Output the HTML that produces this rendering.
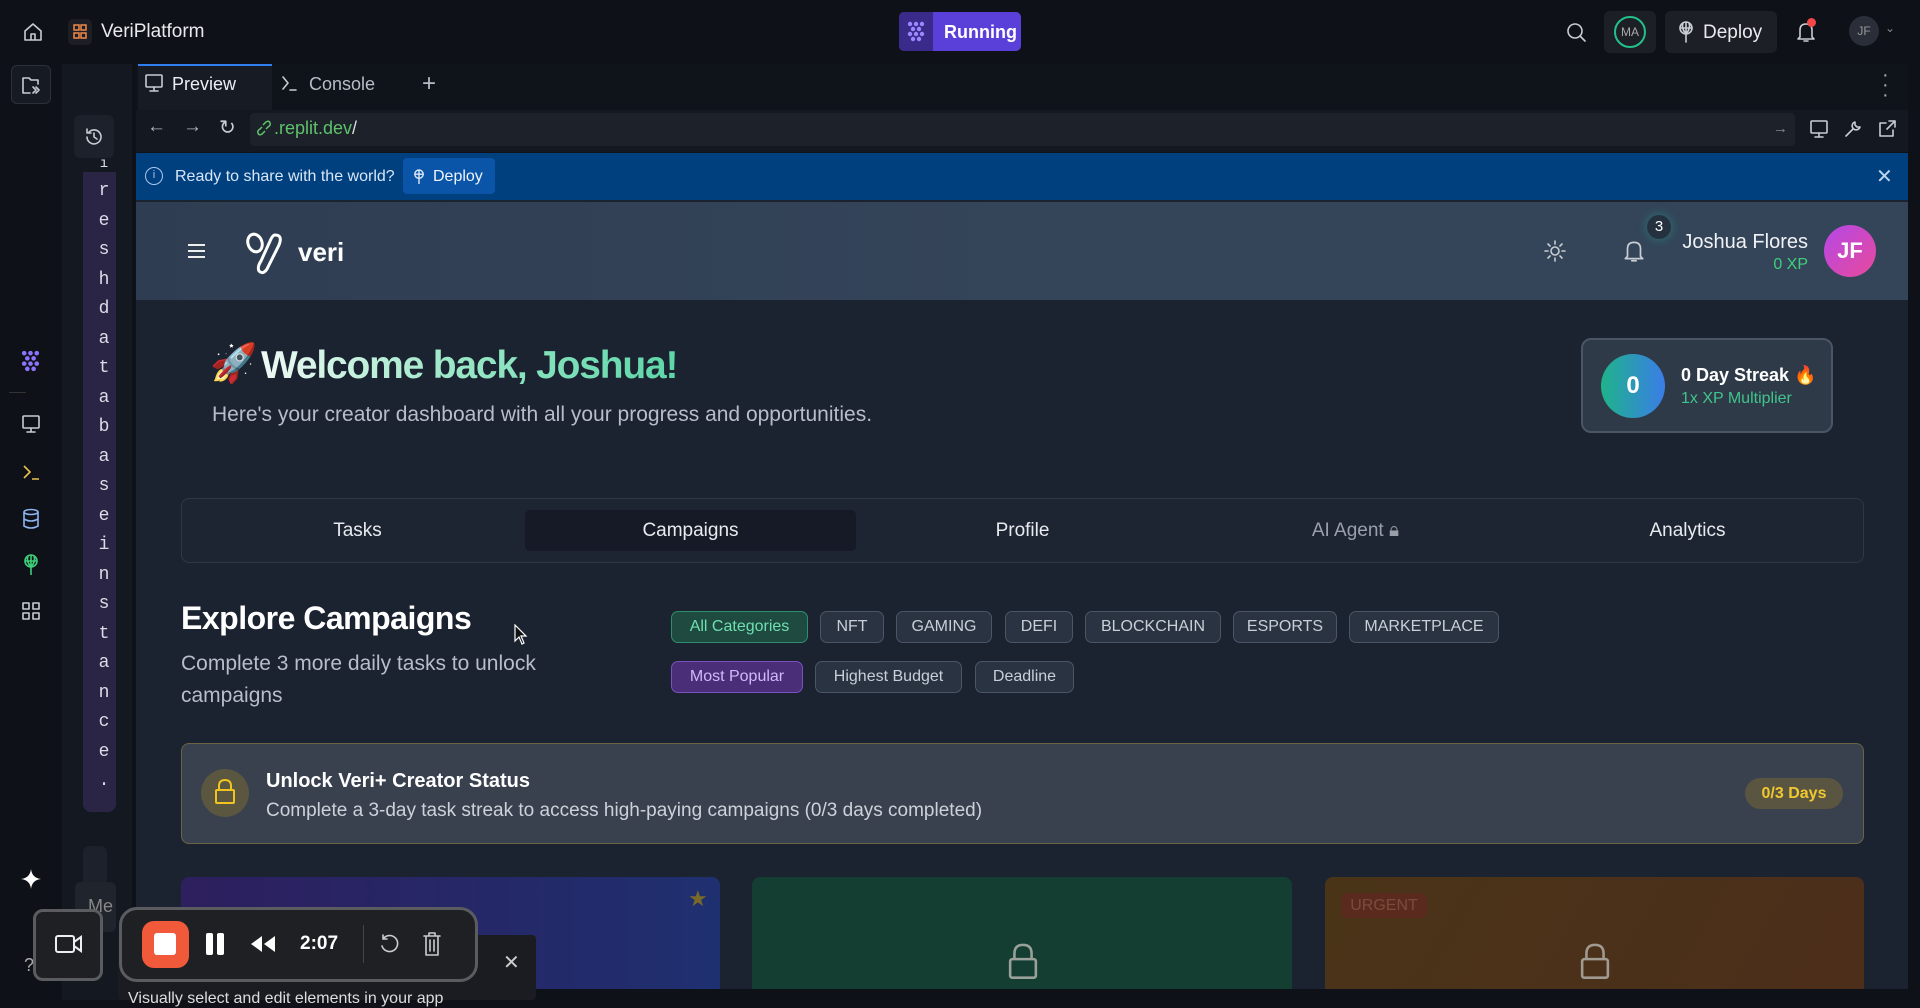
<!DOCTYPE html>
<html><head><meta charset="utf-8"><style>
*{margin:0;padding:0;box-sizing:border-box}
body{width:1920px;height:1000px;overflow:hidden;background:#0e1117;font-family:"Liberation Sans",sans-serif;color:#e6e8eb;position:relative}
.a{position:absolute}
.chip{position:absolute;height:32px;border:1.5px solid #4a5566;border-radius:7px;background:#2a3341;color:#c9cfd8;font-size:16px;display:flex;align-items:center;justify-content:center}
.ic{position:absolute;stroke:#c9ccd2;fill:none;stroke-width:1.6;stroke-linecap:round;stroke-linejoin:round}
.tab{position:absolute;top:511px;height:40px;width:333px;display:flex;align-items:center;justify-content:center;font-size:19px;color:#e8eaee}
.vl{position:absolute;left:97px;width:14px;text-align:center;font-size:18px;color:#dcdce6;font-family:"Liberation Mono",monospace}
</style></head><body>
<!-- top bar -->
<svg class="ic" style="left:22px;top:21px" width="22" height="22" viewBox="0 0 22 22"><path d="M3 10 L11 3 L19 10 V19 H3 Z M9 19 V13 H13 V19"/></svg>
<div class="a" style="left:68px;top:19px;width:24px;height:26px;background:#1c1e24;border-radius:5px"></div>
<svg class="a" style="left:73px;top:24px" width="14" height="16" viewBox="0 0 14 16"><g fill="none" stroke="#f08a4b" stroke-width="1.5"><rect x="1" y="1" width="5" height="5"/><rect x="8" y="1" width="5" height="5"/><rect x="1" y="9" width="5" height="5"/><rect x="8" y="9" width="5" height="5"/></g></svg>
<div class="a" style="left:101px;top:21px;font-size:19px;color:#e8eaee">VeriPlatform</div>
<div class="a" style="left:899px;top:12px;width:122px;height:39px;border-radius:5px;background:#5a3fd8;overflow:hidden">
 <div class="a" style="left:0;top:0;width:34px;height:39px;background:#3a2a8a"></div>
 <svg class="a" style="left:7px;top:9px" width="21" height="21" viewBox="0 0 21 21" fill="#9b87ff"><circle cx="4" cy="3" r="2.2"/><circle cx="10" cy="3" r="2.2"/><circle cx="16" cy="3" r="2.2"/><circle cx="7" cy="8" r="2.2"/><circle cx="13" cy="8" r="2.2"/><circle cx="4" cy="13" r="2.2"/><circle cx="10" cy="13" r="2.2"/><circle cx="16" cy="13" r="2.2"/><circle cx="7" cy="18" r="2.2"/><circle cx="13" cy="18" r="2.2"/></svg>
 <div class="a" style="left:45px;top:10px;font-size:18px;font-weight:bold;color:#fff">Running</div>
</div>
<svg class="ic" style="left:1565px;top:21px" width="22" height="22" viewBox="0 0 22 22"><circle cx="10" cy="10" r="7"/><path d="M15 15 L20 20"/></svg>
<div class="a" style="left:1604px;top:11px;width:52px;height:42px;background:#1c1f26;border-radius:6px"></div>
<div class="a" style="left:1614px;top:16px;width:32px;height:32px;border:2.5px solid #22c08a;border-radius:50%;font-size:12px;color:#aaa;display:flex;align-items:center;justify-content:center">MA</div>
<div class="a" style="left:1665px;top:11px;width:112px;height:42px;background:#1c1f26;border-radius:6px"></div>
<svg class="ic" style="left:1676px;top:20px" width="20" height="24" viewBox="0 0 20 24"><circle cx="10" cy="8" r="6"/><path d="M4 8 H16 M10 2 V22 M7 3 Q5 8 10 14 Q15 8 13 3"/></svg>
<div class="a" style="left:1703px;top:22px;font-size:19px;color:#e8eaee">Deploy</div>
<svg class="ic" style="left:1795px;top:20px" width="22" height="24" viewBox="0 0 22 24"><path d="M5 17 V10 Q5 4 11 4 Q17 4 17 10 V17 L19 19 H3 Z M9 21 H13"/></svg>
<div class="a" style="left:1807px;top:18px;width:9px;height:9px;border-radius:50%;background:#f04848"></div>
<div class="a" style="left:1849px;top:16px;width:30px;height:30px;border-radius:50%;background:#2a2e38;font-size:12px;color:#999;display:flex;align-items:center;justify-content:center">JF</div>
<div class="a" style="left:1885px;top:21px;font-size:12px;color:#888">⌄</div>

<!-- left rail -->
<div class="a" style="left:11px;top:65px;width:40px;height:39px;border:1px solid #2c3038;border-radius:6px;background:#161a22"></div>
<svg class="ic" style="left:20px;top:74px" width="22" height="22" viewBox="0 0 22 22"><path d="M3 4 H9 L11 6 H18 V10 M3 4 V19 H10 M13 13 L16 16 L13 19 M16 13 L19 16 L16 19"/></svg>
<svg class="a" style="left:20px;top:350px" width="22" height="22" viewBox="0 0 21 21" fill="#8b74ff"><circle cx="4" cy="3" r="2.2"/><circle cx="10" cy="3" r="2.2"/><circle cx="16" cy="3" r="2.2"/><circle cx="7" cy="8" r="2.2"/><circle cx="13" cy="8" r="2.2"/><circle cx="4" cy="13" r="2.2"/><circle cx="10" cy="13" r="2.2"/><circle cx="16" cy="13" r="2.2"/><circle cx="7" cy="18" r="2.2"/><circle cx="13" cy="18" r="2.2"/></svg>
<div class="a" style="left:9px;top:392px;width:17px;height:1px;background:#333"></div>
<svg class="ic" style="left:20px;top:413px" width="22" height="22" viewBox="0 0 22 22"><rect x="3" y="3" width="16" height="12" rx="1"/><path d="M11 15 V19 M7 19 H15"/></svg>
<svg class="a" style="left:20px;top:461px" width="22" height="22" viewBox="0 0 22 22" fill="none" stroke="#e8c14a" stroke-width="1.6"><path d="M4 5 L10 11 L4 17 M12 18 H19"/></svg>
<svg class="a" style="left:21px;top:508px" width="20" height="22" viewBox="0 0 20 22" fill="none" stroke="#8fb4f0" stroke-width="1.6"><ellipse cx="10" cy="4" rx="7" ry="2.5"/><path d="M3 4 V18 Q10 22 17 18 V4 M3 11 Q10 15 17 11"/></svg>
<svg class="a" style="left:21px;top:553px" width="20" height="24" viewBox="0 0 20 24" fill="none" stroke="#3ecf7a" stroke-width="1.6"><circle cx="10" cy="8" r="6"/><path d="M4 8 H16 M10 2 V22 M7 3 Q5 8 10 14 Q15 8 13 3"/></svg>
<svg class="ic" style="left:21px;top:601px" width="20" height="20" viewBox="0 0 20 20"><rect x="2" y="2" width="6" height="6"/><rect x="12" y="2" width="6" height="6"/><rect x="2" y="12" width="6" height="6"/><rect x="12" y="12" width="6" height="6"/></svg>
<svg class="a" style="left:21px;top:869px" width="20" height="20" viewBox="0 0 20 20" fill="#fff"><path d="M10 0 Q11 9 20 10 Q11 11 10 20 Q9 11 0 10 Q9 9 10 0Z"/></svg>
<div class="a" style="left:24px;top:955px;font-size:18px;color:#aaa">?</div>

<!-- second column -->
<div class="a" style="left:62px;top:64px;width:70px;height:936px;background:#141821"></div>
<div class="a" style="left:74px;top:115px;width:40px;height:43px;background:#1c212b;border-radius:6px"></div>
<svg class="ic" style="left:83px;top:126px" width="22" height="22" viewBox="0 0 22 22"><path d="M4 11 A7 7 0 1 0 6 6 M4 3 V7 H8 M11 7 V11 L14 13"/></svg>
<div class="a" style="left:83px;top:172px;width:33px;height:640px;background:#2a2545;border-radius:0 0 8px 8px"></div>
<div class="vl" style="top:156px;font-size:14px">ı</div>
<div class="vl" style="top:181px">r</div><div class="vl" style="top:211px">e</div><div class="vl" style="top:240px">s</div><div class="vl" style="top:270px">h</div><div class="vl" style="top:299px">d</div><div class="vl" style="top:329px">a</div><div class="vl" style="top:358px">t</div><div class="vl" style="top:388px">a</div><div class="vl" style="top:417px">b</div><div class="vl" style="top:447px">a</div><div class="vl" style="top:476px">s</div><div class="vl" style="top:506px">e</div><div class="vl" style="top:535px">i</div><div class="vl" style="top:565px">n</div><div class="vl" style="top:594px">s</div><div class="vl" style="top:624px">t</div><div class="vl" style="top:653px">a</div><div class="vl" style="top:683px">n</div><div class="vl" style="top:712px">c</div><div class="vl" style="top:742px">e</div><div class="vl" style="top:771px">.</div>
<div class="a" style="left:83px;top:846px;width:24px;height:40px;background:#1c212b;border-radius:6px"></div>
<div class="a" style="left:75px;top:882px;width:41px;height:50px;background:#1f242d;border-radius:6px;font-size:18px;color:#888;padding:14px 0 0 13px">Me</div>

<!-- main panel -->
<div class="a" style="left:136px;top:64px;width:1772px;height:46px;background:#0f131a"></div>
<div class="a" style="left:138px;top:64px;width:134px;height:46px;background:#161b24;border-top:2px solid #2f7ef0"></div>
<svg class="ic" style="left:144px;top:73px" width="20" height="20" viewBox="0 0 20 20"><rect x="2" y="2" width="16" height="12" rx="1"/><path d="M10 14 V18 M6 18 H14"/></svg>
<div class="a" style="left:172px;top:74px;font-size:18px;color:#eceef2">Preview</div>
<svg class="ic" style="left:281px;top:74px" width="18" height="18" viewBox="0 0 18 18" stroke="#888"><path d="M2 3 L7 9 L2 15 M9 16 H15"/></svg>
<div class="a" style="left:309px;top:74px;font-size:18px;color:#b8bcc4">Console</div>
<div class="a" style="left:422px;top:70px;font-size:24px;color:#b8bcc4;font-weight:300">+</div>
<div class="a" style="left:1882px;top:70px;font-size:20px;color:#aaa;line-height:10px">·<br>·<br>·</div>

<div class="a" style="left:136px;top:110px;width:1772px;height:42px;background:#141821"></div>
<div class="a" style="left:250px;top:113px;width:1545px;height:33px;background:#1c212a;border-radius:4px"></div>
<div class="a" style="left:147px;top:116px;font-size:19px;color:#b0b4bc">←</div>
<div class="a" style="left:183px;top:116px;font-size:19px;color:#b0b4bc">→</div>
<div class="a" style="left:219px;top:115px;font-size:20px;color:#c8ccd2">↻</div>
<svg class="a" style="left:257px;top:120px" width="14" height="16" viewBox="0 0 14 16" fill="none" stroke="#5ec26a" stroke-width="1.5"><path d="M6 5 L9 2 Q12 0 13 3 Q14 5 11 7 L9 9 M8 11 L5 14 Q2 16 1 13 Q0 11 3 9 L5 7"/></svg>
<div class="a" style="left:274px;top:118px;font-size:18px;color:#5ec26a">.replit.dev<span style="color:#ddd">/</span></div>
<div class="a" style="left:1773px;top:120px;font-size:15px;color:#888">→</div>
<svg class="ic" style="left:1809px;top:118px" width="20" height="22" viewBox="0 0 20 20"><rect x="2" y="2" width="16" height="12" rx="1"/><path d="M10 14 V18 M6 18 H14"/></svg>
<svg class="ic" style="left:1843px;top:118px" width="20" height="22" viewBox="0 0 20 20"><path d="M3 17 L10 10 M12 3 A4 4 0 1 0 17 8 L14 8 L12 6 Z"/></svg>
<svg class="ic" style="left:1877px;top:118px" width="20" height="22" viewBox="0 0 20 20"><path d="M16 11 V17 H3 V4 H9 M12 2 H18 V8 M18 2 L10 10"/></svg>

<!-- banner -->
<div class="a" style="left:136px;top:153px;width:1772px;height:47px;background:#00407f"></div>
<div class="a" style="left:145px;top:167px;width:18px;height:18px;border:1.5px solid #aac8f0;border-radius:50%;font-size:11px;color:#aac8f0;text-align:center;line-height:15px">i</div>
<div class="a" style="left:175px;top:168px;font-size:16px;color:#d8e6f8">Ready to share with the world?</div>
<div class="a" style="left:403px;top:158px;width:92px;height:36px;background:#0a55a8;border-radius:4px"></div>
<svg class="a" style="left:412px;top:168px" width="14" height="18" viewBox="0 0 20 24" fill="none" stroke="#dce8f8" stroke-width="2"><circle cx="10" cy="8" r="6"/><path d="M4 8 H16 M10 2 V22"/></svg>
<div class="a" style="left:433px;top:168px;font-size:16px;color:#eef4fc">Deploy</div>
<div class="a" style="left:1876px;top:164px;font-size:20px;color:#bcd4f0">✕</div>

<!-- app -->
<div class="a" style="left:136px;top:200px;width:1772px;height:789px;background:#1b2230"></div>
<div class="a" style="left:136px;top:202px;width:1772px;height:98px;background:linear-gradient(90deg,#2f3d52,#344459 50%,#344559)"></div>
<div class="a" style="left:188px;top:244px;width:17px;height:2px;background:#eee;box-shadow:0 6px 0 #eee,0 12px 0 #eee"></div>
<svg class="a" style="left:245px;top:231px" width="44" height="44" viewBox="0 0 44 44" fill="none" stroke="#fff" stroke-width="3"><ellipse cx="10" cy="12" rx="7" ry="9" transform="rotate(-20 10 12)"/><path d="M30 4 Q38 4 34 14 L22 38 Q18 44 14 40 Q12 36 16 30 L26 8 Q28 4 30 4Z"/></svg>
<div class="a" style="left:298px;top:237px;font-size:26px;font-weight:bold;color:#fff">veri</div>
<svg class="ic" style="left:1543px;top:239px" width="24" height="24" viewBox="0 0 24 24" stroke="#eee"><circle cx="12" cy="12" r="4"/><path d="M12 2V5M12 19V22M2 12H5M19 12H22M5 5L7 7M17 17L19 19M5 19L7 17M17 7L19 5"/></svg>
<svg class="ic" style="left:1622px;top:238px" width="24" height="26" viewBox="0 0 22 24" stroke="#eee"><path d="M5 17 V10 Q5 4 11 4 Q17 4 17 10 V17 L19 19 H3 Z M9 21 H13"/></svg>
<div class="a" style="left:1647px;top:215px;width:24px;height:24px;border-radius:50%;background:#263140;box-shadow:0 0 10px #2b7a7a;font-size:15px;color:#fff;text-align:center;line-height:24px">3</div>
<div class="a" style="left:1640px;top:231px;width:168px;text-align:right;font-size:20px;color:#f0f2f5">Joshua Flores</div>
<div class="a" style="left:1700px;top:256px;width:108px;text-align:right;font-size:16px;color:#3fd07a">0 XP</div>
<div class="a" style="left:1824px;top:225px;width:52px;height:52px;border-radius:50%;background:linear-gradient(135deg,#b447e8,#e84a9a);font-size:22px;font-weight:bold;color:#fff;text-align:center;line-height:52px">JF</div>

<div class="a" style="left:210px;top:342px;font-size:38px">🚀</div>
<div class="a" style="left:261px;top:344px;font-size:39px;font-weight:bold;letter-spacing:-1.2px;background:linear-gradient(90deg,#eefaf5,#9de8c8 45%,#5dd6a8);-webkit-background-clip:text;color:transparent">Welcome back, Joshua!</div>
<div class="a" style="left:212px;top:403px;font-size:21px;color:#b8bec8">Here's your creator dashboard with all your progress and opportunities.</div>

<div class="a" style="left:1581px;top:338px;width:252px;height:95px;border:2px solid #4a5566;border-radius:10px;background:#2f3a48"></div>
<div class="a" style="left:1601px;top:354px;width:64px;height:64px;border-radius:50%;background:linear-gradient(90deg,#1fb38a,#3a7de8);font-size:24px;font-weight:bold;color:#fff;text-align:center;line-height:64px">0</div>
<div class="a" style="left:1681px;top:365px;font-size:18px;font-weight:bold;color:#fff">0 Day Streak 🔥</div>
<div class="a" style="left:1681px;top:390px;font-size:16px;color:#3fc48c">1x XP Multiplier</div>

<div class="a" style="left:181px;top:498px;width:1683px;height:65px;border:1.5px solid #2e3746;border-radius:8px;background:#1d2533"></div>
<div class="a" style="left:525px;top:510px;width:331px;height:41px;background:#161a26;border-radius:5px"></div>
<div class="tab" style="left:191px">Tasks</div>
<div class="tab" style="left:524px">Campaigns</div>
<div class="tab" style="left:856px">Profile</div>
<div class="tab" style="left:1189px;color:#9aa0aa">AI Agent 🔒︎</div>
<div class="tab" style="left:1521px">Analytics</div>

<div class="a" style="left:181px;top:600px;font-size:32px;font-weight:bold;color:#fff;letter-spacing:-0.5px">Explore Campaigns</div>
<div class="a" style="left:181px;top:648px;width:420px;font-size:21px;line-height:32px;color:#b8bec8">Complete 3 more daily tasks to unlock campaigns</div>
<svg class="a" style="left:514px;top:624px" width="14" height="22" viewBox="0 0 14 22"><path d="M1 1 V17 L5 13 L8 20 L10 19 L7 12 L12 12 Z" fill="#111" stroke="#fff" stroke-width="1.2"/></svg>

<div class="chip" style="left:671px;top:611px;width:137px;background:#1f4a40;border-color:#2f8e6c;color:#6ee0b0">All Categories</div>
<div class="chip" style="left:820px;top:611px;width:64px">NFT</div>
<div class="chip" style="left:896px;top:611px;width:96px">GAMING</div>
<div class="chip" style="left:1005px;top:611px;width:68px">DEFI</div>
<div class="chip" style="left:1085px;top:611px;width:136px">BLOCKCHAIN</div>
<div class="chip" style="left:1233px;top:611px;width:104px">ESPORTS</div>
<div class="chip" style="left:1349px;top:611px;width:150px">MARKETPLACE</div>
<div class="chip" style="left:671px;top:661px;width:132px;background:#4a2f78;border-color:#7a4fc0;color:#d2b8f8">Most Popular</div>
<div class="chip" style="left:815px;top:661px;width:147px">Highest Budget</div>
<div class="chip" style="left:975px;top:661px;width:99px">Deadline</div>

<div class="a" style="left:181px;top:743px;width:1683px;height:101px;border:1.5px solid #6a6445;border-radius:8px;background:#3a414e"></div>
<div class="a" style="left:201px;top:769px;width:48px;height:48px;border-radius:50%;background:#5a5640"></div>
<svg class="a" style="left:214px;top:778px" width="22" height="28" viewBox="0 0 22 28" fill="none" stroke="#f0c420" stroke-width="2"><path d="M5 12 V8 Q5 2 11 2 Q17 2 17 8 V12"/><rect x="2" y="12" width="18" height="13" rx="1"/></svg>
<div class="a" style="left:266px;top:770px;font-size:20px;font-weight:bold;color:#fff">Unlock Veri+ Creator Status</div>
<div class="a" style="left:266px;top:800px;font-size:19px;color:#cdd2da">Complete a 3-day task streak to access high-paying campaigns (0/3 days completed)</div>
<div class="a" style="left:1745px;top:778px;width:98px;height:31px;border-radius:16px;background:#5a5540;color:#f0c830;font-size:16px;font-weight:bold;text-align:center;line-height:31px">0/3 Days</div>

<div class="a" style="left:181px;top:877px;width:539px;height:112px;border-radius:8px 8px 0 0;background:linear-gradient(90deg,#2e1f5e,#232a6a 70%,#1f3070)"></div>
<div class="a" style="left:688px;top:886px;font-size:22px;color:#7a6a2a">★</div>
<div class="a" style="left:752px;top:877px;width:540px;height:112px;border-radius:8px 8px 0 0;background:#153e32"></div>
<div class="a" style="left:1325px;top:877px;width:539px;height:112px;border-radius:8px 8px 0 0;background:linear-gradient(120deg,#4a3418,#4c2e1a)"></div>
<div class="a" style="left:1341px;top:893px;width:86px;height:25px;border-radius:6px;background:#5a2a1e;color:#7a4c3c;font-size:16px;text-align:center;line-height:25px">URGENT</div>
<svg class="a" style="left:1005px;top:942px" width="36" height="40" viewBox="0 0 22 28" fill="none" stroke="#9aa09a" stroke-width="1.8"><path d="M5 12 V8 Q5 2 11 2 Q17 2 17 8 V12"/><rect x="2" y="12" width="18" height="13" rx="1.5"/></svg>
<svg class="a" style="left:1577px;top:942px" width="36" height="40" viewBox="0 0 22 28" fill="none" stroke="#a09a90" stroke-width="1.8"><path d="M5 12 V8 Q5 2 11 2 Q17 2 17 8 V12"/><rect x="2" y="12" width="18" height="13" rx="1.5"/></svg>

<!-- recorder overlay -->
<div class="a" style="left:118px;top:935px;width:418px;height:65px;background:#1a1c22;border-radius:4px"></div>
<div class="a" style="left:503px;top:950px;font-size:20px;color:#ccc">✕</div>
<div class="a" style="left:128px;top:990px;font-size:16px;color:#ddd">Visually select and edit elements in your app</div>
<div class="a" style="left:33px;top:909px;width:70px;height:72px;border:3px solid #5a5c60;border-radius:10px;background:#1f2023"></div>
<svg class="a" style="left:54px;top:932px" width="30" height="24" viewBox="0 0 30 24" fill="none" stroke="#eee" stroke-width="2"><rect x="2" y="4" width="18" height="16" rx="2"/><path d="M20 10 L27 5 V19 L20 14"/></svg>
<div class="a" style="left:119px;top:907px;width:359px;height:75px;border:3px solid #5a5c60;border-radius:18px;background:#1f2023"></div>
<div class="a" style="left:142px;top:921px;width:47px;height:47px;border-radius:12px;background:#f05a3a"></div>
<div class="a" style="left:154px;top:933px;width:22px;height:22px;border-radius:3px;background:#fff"></div>
<div class="a" style="left:206px;top:933px;width:7px;height:22px;border-radius:2px;background:#fff"></div>
<div class="a" style="left:217px;top:933px;width:7px;height:22px;border-radius:2px;background:#fff"></div>
<svg class="a" style="left:249px;top:934px" width="28" height="20" viewBox="0 0 28 20" fill="#fff"><path d="M13 2 L2 10 L13 18Z M26 2 L15 10 L26 18Z"/></svg>
<div class="a" style="left:300px;top:933px;font-size:19px;font-weight:bold;color:#fff">2:07</div>
<div class="a" style="left:363px;top:925px;width:1px;height:38px;background:#444"></div>
<svg class="ic" style="left:378px;top:933px" width="22" height="22" viewBox="0 0 22 22" stroke="#eee" stroke-width="2"><path d="M5 6 A8 8 0 1 1 4 13 M5 2 V6 H9"/></svg>
<svg class="ic" style="left:421px;top:931px" width="22" height="26" viewBox="0 0 22 26" stroke="#eee" stroke-width="2"><path d="M3 5 H19 M8 5 V2 H14 V5 M5 5 V24 H17 V5 M9 9 V20 M13 9 V20"/></svg>
</body></html>
